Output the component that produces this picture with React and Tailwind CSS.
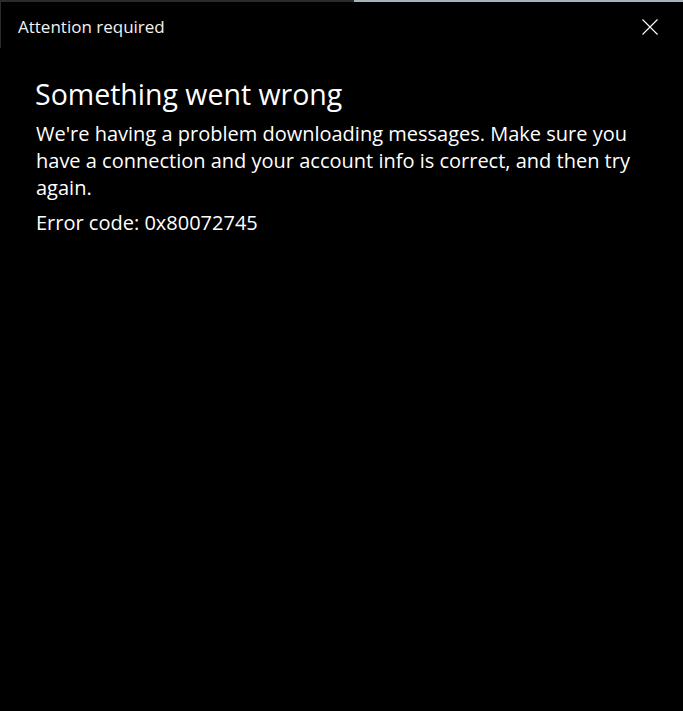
import React from "react";

function CloseIcon() {
  return (
    <svg width="16" height="16" viewBox="0 0 16 16" fill="none" stroke="white" strokeWidth="1.1">
      <path d="M0.5 0.5 L15.5 15.5 M15.5 0.5 L0.5 15.5" />
    </svg>
  );
}

export default function App() {
  return (
    <div className="w-[683px] h-[711px] bg-black text-white flex flex-col overflow-hidden" style={{ fontFamily: '"Open Sans", "Noto Sans", sans-serif' }}>
      <div className="flex h-[2px] shrink-0">
        <div className="w-[354px] bg-[#2b2b2b]" />
        <div className="flex-1 bg-[#a7b2b9]" />
      </div>
      <div className="flex h-[46px] shrink-0">
        <div className="flex-1 border-l border-[#2b2b2b] flex items-center pl-[17px] pt-[3px] text-[17px] text-[#f2f2f2]">
          Attention required
        </div>
        <div className="w-[56px] flex items-center justify-center pr-[11px] pt-[3px]">
          <CloseIcon />
        </div>
      </div>
      <div className="pl-[35px] pr-[40px] pt-[28px]">
        <h1 className="text-[28.5px] leading-[36px]">Something went wrong</h1>
        <p className="text-[20px] leading-[27px] mt-[8px] pl-[1px]">
          We're having a problem downloading messages. Make sure you have a connection and your account info is correct, and then try again.
        </p>
        <p className="text-[20px] leading-[27px] mt-[8px] pl-[1px]">Error code: 0x80072745</p>
      </div>
    </div>
  );
}
